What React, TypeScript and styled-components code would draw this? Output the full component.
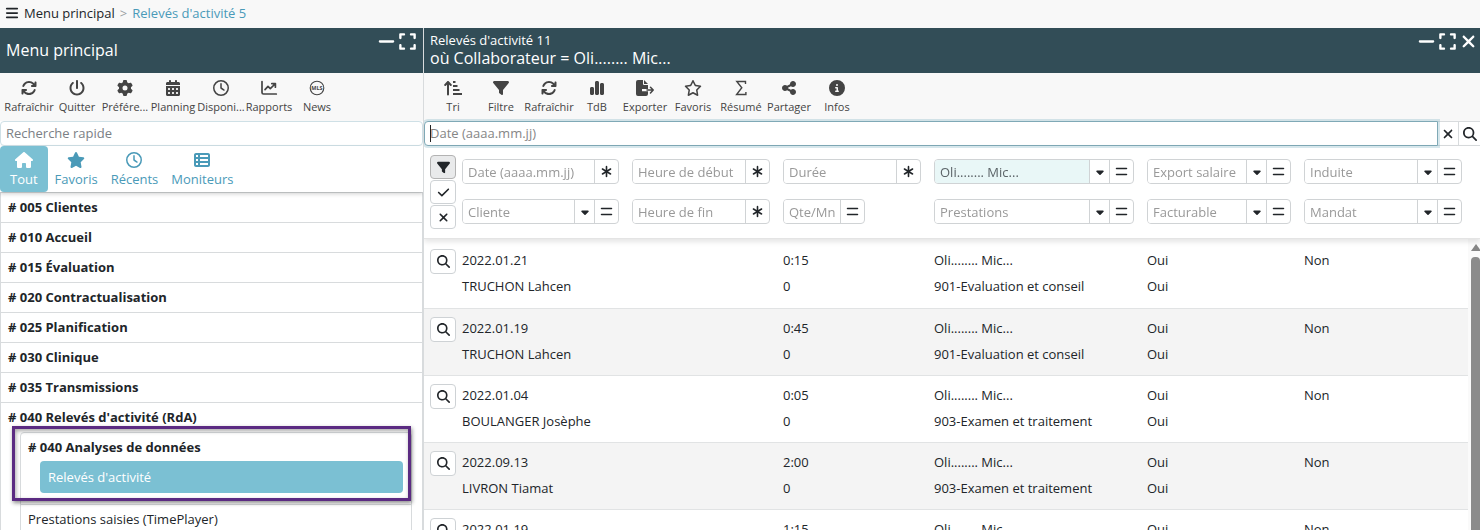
import React from "react";
import styled, { createGlobalStyle } from "styled-components";
import {
  FaBars, FaMinus, FaExpand, FaXmark, FaArrowsRotate, FaPowerOff, FaGear, FaCalendarDays, FaRegClock,
  FaHouse, FaStar, FaTableList, FaFilter, FaChartSimple, FaRegStar,
  FaShareNodes, FaCircleInfo, FaCheck, FaMagnifyingGlass, FaAsterisk, FaCaretDown,
} from "react-icons/fa6";

const line = "#d8dbdd";
const teal = "#7bc0d3";

const GlobalStyle = createGlobalStyle`
  * { box-sizing: border-box; }
  html, body { margin: 0; height: 100%; overflow: hidden; }
  #root { height: 100%; }
  body, button, input { font-family: "Open Sans", "Noto Sans", sans-serif; font-size: 13px; color: #212529; }
  button { padding: 0; cursor: pointer; }
`;

const Page = styled.div`
  height: 100vh;
  display: flex;
  flex-direction: column;
  background: #fff;
  overflow: hidden;
`;

const Breadcrumb = styled.nav`
  flex: none;
  height: 28px;
  display: flex;
  align-items: center;
  gap: 5px;
  padding: 0 5px 2px;
  background: #f8f8f8;
  a { text-decoration: none; color: #212529; }
  a:last-child { color: #4a9ab8; }
  span { color: #9a9fa3; }
`;

const BareButton = styled.button`
  display: flex;
  align-items: center;
  justify-content: center;
  border: 0;
  background: none;
  color: inherit;
`;

const Columns = styled.div`
  flex: 1;
  min-height: 0;
  display: grid;
  grid-template-columns: 106fr 264fr;
`;

const Pane = styled.section`
  min-width: 0;
  display: flex;
  flex-direction: column;
  overflow: hidden;
`;

const SidePane = styled(Pane)`
  border-right: 1px solid ${line};
`;

const TitleBar = styled.header<{ $end: number }>`
  flex: none;
  height: 45px;
  display: flex;
  align-items: center;
  justify-content: space-between;
  padding: 0 ${(p) => p.$end}px 2px 6px;
  background: #324d57;
  color: #fff;
  h1, h2 { margin: 0; font-weight: 400; font-size: 16px; line-height: 18px; }
  p { margin: 0; line-height: 17px; }
`;

const WindowButtons = styled.div`
  align-self: flex-start;
  display: flex;
  gap: 2px;
  padding-top: 4px;
  svg { width: 19px; height: 19px; }
`;

const Toolbar = styled.div<{ $indent: number }>`
  flex: none;
  height: 48px;
  display: flex;
  padding-left: ${(p) => p.$indent}px;
  background: #f8f8f8;
`;

const Tool = styled.button`
  width: 48px;
  display: flex;
  flex-direction: column;
  align-items: center;
  gap: 3px;
  padding-top: 7px;
  border: 0;
  background: none;
  color: #444;
  font-size: 11px;
  line-height: 15px;
  white-space: nowrap;
  svg { width: 18px; height: 16px; flex: none; }
`;

const QuickSearch = styled.input`
  flex: none;
  width: 100%;
  height: 25px;
  padding: 0 5px 2px;
  border: 1px solid #cfe0e6;
  border-radius: 4px;
  outline: 0;
  &::placeholder { color: #7b8085; opacity: 1; }
`;

const Tabs = styled.div`
  flex: none;
  height: 46px;
  display: flex;
  gap: 1px;
  box-shadow: 0 2px 4px rgba(0, 0, 0, 0.18);
  position: relative;
`;

const Tab = styled.button<{ $active?: boolean }>`
  display: flex;
  flex-direction: column;
  align-items: center;
  gap: 1px;
  padding: 6px ${(p) => (p.$active ? 10 : 6)}px 0;
  border: 0;
  border-radius: 4px;
  background: ${(p) => (p.$active ? teal : "none")};
  color: ${(p) => (p.$active ? "#fff" : "#4a9ab8")};
  line-height: 20px;
  svg { width: 18px; height: 16px; flex: none; }
`;

const Menu = styled.ul`
  list-style: none;
  margin: 0;
  padding: 0;
  border: 1px solid ${line};
  border-bottom: 0;
`;

const MenuItem = styled.li`
  border-bottom: 1px solid ${line};
`;

const MenuLink = styled.a<{ $strong?: boolean }>`
  display: block;
  padding: 5px 7px;
  color: #212529;
  font-weight: ${(p) => (p.$strong ? 700 : 400)};
  line-height: 19px;
  text-decoration: none;
`;

const SubMenu = styled.ul`
  list-style: none;
  margin: 0 10px 0 19px;
  padding: 0;
  border: 1px solid ${line};
  border-radius: 4px 4px 0 0;
  position: relative;
`;

const Group = styled.li`
  padding: 5px 8px 11px 7px;
  border-bottom: 1px solid ${line};
  strong { display: block; line-height: 19px; }
`;

const ActiveLink = styled.a`
  display: block;
  margin: 4px 0 0 12px;
  padding: 0 8px;
  border-radius: 4px;
  background: ${teal};
  color: #fff;
  line-height: 32px;
  text-decoration: none;
`;

const Highlight = styled.li`
  position: absolute;
  inset: -7px 0 auto -9px;
  height: 75px;
  border: 3px solid #5b2b82;
  box-shadow: 1px 2px 4px rgba(0, 0, 0, 0.45), inset 1px 2px 4px rgba(0, 0, 0, 0.35);
  pointer-events: none;
`;

const SearchRow = styled.form`
  flex: none;
  height: 25px;
  display: flex;
  position: relative;
`;

const SearchInput = styled.input`
  flex: 1;
  min-width: 0;
  padding: 0 5px 2px;
  border: 1px solid #7fa9b6;
  border-radius: 4px 0 0 4px;
  outline: 0;
  box-shadow: 0 0 0 2px rgba(123, 175, 192, 0.3);
  caret-color: transparent;
  position: relative;
  &::placeholder { color: #868686; opacity: 1; }
`;

const Caret = styled.span`
  position: absolute;
  left: 6px;
  top: 4px;
  width: 1px;
  height: 17px;
  background: #222;
`;

const SearchButton = styled(BareButton)<{ $w: number }>`
  width: ${(p) => p.$w}px;
  border: 1px solid ${line};
  border-left-width: ${(p) => (p.$w > 21 ? 1 : 0)}px;
  border-right: 0;
  color: #212529;
  svg { width: 14px; height: 14px; }
`;

const Filters = styled.div`
  flex: none;
  display: flex;
  gap: 6px;
  height: 93px;
  padding: 9px 18px 0 6px;
  border-bottom: 1px solid #e4e4e4;
  box-shadow: 0 3px 5px rgba(0, 0, 0, 0.1);
  position: relative;
`;

const FilterModes = styled.div`
  width: 26px;
`;

const ModeButton = styled(BareButton)<{ $on?: boolean }>`
  width: 26px;
  height: 24px;
  margin-bottom: 1px;
  border: 1px solid ${(p) => (p.$on ? "#b3b3b3" : "#ced2d5")};
  border-radius: 4px;
  background: ${(p) => (p.$on ? "#e9eaeb" : "#fff")};
  svg { width: 13px; height: 13px; }
`;

const FilterGrid = styled.div`
  flex: 1;
  min-width: 0;
  display: grid;
  grid-template-columns: 157fr 138fr 138fr 200fr 144fr 158fr;
  grid-auto-rows: 25px;
  gap: 15px 13px;
  padding-top: 4px;
`;

const Field = styled.div<{ $short?: boolean; $filled?: boolean }>`
  display: flex;
  min-width: 0;
  width: ${(p) => (p.$short ? "82px" : "auto")};
  border: 1px solid #d0d3d5;
  border-radius: 4px;
  overflow: hidden;
  input {
    flex: 1;
    min-width: 0;
    width: 0;
    padding: 0 0 0 5px;
    border: 0;
    outline: 0;
    color: #5c6468;
    background: ${(p) => (p.$filled ? "#e9f7f7" : "#fff")};
  }
  input::placeholder { color: #999; opacity: 1; }
`;

const FieldButton = styled(BareButton)<{ $w: number }>`
  flex: none;
  width: ${(p) => p.$w}px;
  border-left: 1px solid #d0d3d5;
  color: #212529;
  svg { width: ${(p) => (p.$w < 24 ? 12 : 13)}px; height: ${(p) => (p.$w < 24 ? 12 : 13)}px; }
`;

const Results = styled.div`
  flex: 1;
  min-height: 0;
  display: flex;
`;

const Table = styled.table`
  flex: 1;
  min-width: 0;
  display: block;
  overflow: hidden;
  tbody { display: block; }
`;

const Row = styled.tr`
  display: flex;
  min-height: 67px;
  padding: 8px 6px 0;
  border-bottom: 1px solid #e1e3e4;
  &:first-child { padding-top: 10px; min-height: 70px; }
  &:nth-child(even) { background: #f4f4f4; }
`;

const OpenCell = styled.td`
  flex: none;
  width: 26px;
  padding: 0;
`;

const Cell = styled.td<{ $w: number }>`
  flex: ${(p) => p.$w} 1 0;
  min-width: 0;
  display: flex;
  flex-direction: column;
  gap: 4px;
  padding: 0;
  margin-left: 13px;
  line-height: 22px;
  white-space: nowrap;
  ${OpenCell} + & { margin-left: 6px; }
`;

const OpenButton = styled(BareButton)`
  width: 26px;
  height: 25px;
  border: 1px solid #ced2d5;
  border-radius: 4px;
  background: #fff;
  svg { width: 13px; height: 13px; }
`;

const Scrollbar = styled.div`
  flex: none;
  width: 12px;
  display: flex;
  flex-direction: column;
  align-items: center;
  gap: 6px;
  padding: 5px 0 0 3px;
  background: #fafafa;
`;

const ScrollArrow = styled.span`
  border: 5px solid transparent;
  border-top: 0;
  border-bottom: 7px solid #858585;
`;

const ScrollThumb = styled.span`
  width: 9px;
  flex: 1;
  border-radius: 4px 4px 0 0;
  background: #8b8b8b;
`;

const ChartIcon = () => (
  <svg viewBox="0 0 16 16" fill="none" stroke="currentColor" strokeWidth="1.7" strokeLinecap="round" strokeLinejoin="round">
    <path d="M1 1.5V12.5Q1 14 2.5 14H15.3M4 9.6L7 6.4L9.3 8.6L14 4M10.8 3.6H14.4V7.2" />
  </svg>
);

const NewsIcon = () => (
  <svg viewBox="0 0 16 16" fill="none" stroke="currentColor">
    <circle cx="8" cy="8" r="6.8" strokeWidth="1.1" />
    <text x="8" y="10" textAnchor="middle" fontSize="5.5" fontWeight="700" fill="currentColor" stroke="none">MLS</text>
  </svg>
);

const SumIcon = () => (
  <svg viewBox="0 0 16 16" fill="none" stroke="currentColor" strokeWidth="1.4">
    <path d="M12.5 4V1.5H3.8L8.8 7.8L3.6 14.5H12.9V12" />
  </svg>
);

const SortIcon = () => (
  <svg viewBox="0 0 18 16" fill="none" stroke="currentColor" strokeWidth="2" strokeLinecap="round" strokeLinejoin="round">
    <path d="M4 14.5V2M1.2 5L4 2L6.8 5" />
    <path strokeLinecap="butt" d="M9 2H11.5M9 6H13.5M9 10H15.5M9 14H18" />
  </svg>
);

const ExportIcon = () => (
  <svg viewBox="0 0 18 16" fill="currentColor">
    <path d="M0 2Q0 0 2 0H7V4Q7 5 8 5H12V9H6V11.2H12V14Q12 16 10 16H2Q0 16 0 14ZM8 0L12 4H8Z" />
    <path d="M11 10.1H17M14.5 7.3L17.2 10.1L14.5 12.9" fill="none" stroke="currentColor" strokeWidth="1.5" strokeLinecap="round" strokeLinejoin="round" />
  </svg>
);

const EqualsIcon = () => (
  <svg viewBox="0 0 13 13" fill="none" stroke="currentColor" strokeWidth="1.5" strokeLinecap="round">
    <path d="M1.5 3.5H11.5M1.5 9.5H11.5" />
  </svg>
);

const mainTools: [React.ReactNode, string][] = [
  [<FaArrowsRotate />, "Rafraîchir"], [<FaPowerOff />, "Quitter"], [<FaGear />, "Préfére..."],
  [<FaCalendarDays />, "Planning"], [<FaRegClock />, "Disponi..."], [<ChartIcon />, "Rapports"], [<NewsIcon />, "News"],
];

const listTools: [React.ReactNode, string][] = [
  [<SortIcon />, "Tri"], [<FaFilter />, "Filtre"], [<FaArrowsRotate />, "Rafraîchir"],
  [<FaChartSimple />, "TdB"], [<ExportIcon />, "Exporter"], [<FaRegStar />, "Favoris"],
  [<SumIcon />, "Résumé"], [<FaShareNodes />, "Partager"], [<FaCircleInfo />, "Infos"],
];

const menu = [
  "# 005 Clientes", "# 010 Accueil", "# 015 Évaluation", "# 020 Contractualisation",
  "# 025 Planification", "# 030 Clinique", "# 035 Transmissions",
];

type FilterDef = { label: string; kind: "any" | "select" | "equals"; value?: string };
const filters: FilterDef[] = [
  { label: "Date (aaaa.mm.jj)", kind: "any" },
  { label: "Heure de début", kind: "any" },
  { label: "Durée", kind: "any" },
  { label: "Collaborateur", kind: "select", value: "Oli........ Mic..." },
  { label: "Export salaire", kind: "select" },
  { label: "Induite", kind: "select" },
  { label: "Cliente", kind: "select" },
  { label: "Heure de fin", kind: "any" },
  { label: "Qte/Mn", kind: "equals" },
  { label: "Prestations", kind: "select" },
  { label: "Facturable", kind: "select" },
  { label: "Mandat", kind: "select" },
];

const records = [
  ["2022.01.21", "0:15", "TRUCHON Lahcen", "901-Evaluation et conseil"],
  ["2022.01.19", "0:45", "TRUCHON Lahcen", "901-Evaluation et conseil"],
  ["2022.01.04", "0:05", "BOULANGER Josèphe", "903-Examen et traitement"],
  ["2022.09.13", "2:00", "LIVRON Tiamat", "903-Examen et traitement"],
  ["2022.01.19", "1:15", "TRUCHON Lahcen", "901-Evaluation et conseil"],
];

const Filter = ({ label, kind, value }: FilterDef) => (
  <Field $short={kind === "equals"} $filled={!!value}>
    <input aria-label={label} placeholder={label} defaultValue={value} />
    {kind === "select" && <FieldButton $w={20} aria-label={`Choisir ${label}`}><FaCaretDown /></FieldButton>}
    <FieldButton $w={24} aria-label={`Opérateur ${label}`}>{kind === "any" ? <FaAsterisk /> : <EqualsIcon />}</FieldButton>
  </Field>
);

const Record = ({ data: [date, time, client, service] }: { data: string[] }) => (
  <Row>
    <OpenCell><OpenButton aria-label="Ouvrir"><FaMagnifyingGlass /></OpenButton></OpenCell>
    <Cell $w={157}><span>{date}</span><span>{client}</span></Cell>
    <Cell $w={138} />
    <Cell $w={138}><span>{time}</span><span>0</span></Cell>
    <Cell $w={200}><span>Oli........ Mic...</span><span>{service}</span></Cell>
    <Cell $w={144}><span>Oui</span><span>Oui</span></Cell>
    <Cell $w={158}><span>Non</span></Cell>
  </Row>
);

export default function App() {
  return (
    <>
      <GlobalStyle />
      <Page>
        <Breadcrumb aria-label="Fil d'Ariane">
          <BareButton aria-label="Menu"><FaBars size={14} /></BareButton>
          <a href="#menu">Menu principal</a>
          <span>&gt;</span>
          <a href="#releves">Relevés d'activité 5</a>
        </Breadcrumb>
        <Columns>
          <SidePane>
            <TitleBar $end={6}>
              <h1>Menu principal</h1>
              <WindowButtons>
                <BareButton aria-label="Réduire"><FaMinus /></BareButton>
                <BareButton aria-label="Agrandir"><FaExpand /></BareButton>
              </WindowButtons>
            </TitleBar>
            <Toolbar $indent={5}>
              {mainTools.map(([icon, label]) => <Tool key={label}>{icon}{label}</Tool>)}
            </Toolbar>
            <QuickSearch aria-label="Recherche rapide" placeholder="Recherche rapide" />
            <Tabs>
              <Tab $active><FaHouse />Tout</Tab>
              <Tab><FaStar />Favoris</Tab>
              <Tab><FaRegClock />Récents</Tab>
              <Tab><FaTableList />Moniteurs</Tab>
            </Tabs>
            <Menu>
              {menu.map((m) => <MenuItem key={m}><MenuLink $strong href="#module">{m}</MenuLink></MenuItem>)}
              <MenuItem>
                <MenuLink $strong href="#rda"># 040 Relevés d'activité (RdA)</MenuLink>
                <SubMenu>
                  <Group>
                    <strong># 040 Analyses de données</strong>
                    <ActiveLink href="#releves">Relevés d'activité</ActiveLink>
                  </Group>
                  <li><MenuLink href="#prestations">Prestations saisies (TimePlayer)</MenuLink></li>
                  <Highlight aria-hidden="true" />
                </SubMenu>
              </MenuItem>
            </Menu>
          </SidePane>
          <Pane>
            <TitleBar $end={2}>
              <div>
                <p>Relevés d'activité 11</p>
                <h2>où Collaborateur = Oli........ Mic...</h2>
              </div>
              <WindowButtons>
                <BareButton aria-label="Réduire"><FaMinus /></BareButton>
                <BareButton aria-label="Agrandir"><FaExpand /></BareButton>
                <BareButton aria-label="Fermer"><FaXmark /></BareButton>
              </WindowButtons>
            </TitleBar>
            <Toolbar $indent={5}>
              {listTools.map(([icon, label]) => <Tool key={label}>{icon}{label}</Tool>)}
            </Toolbar>
            <SearchRow>
              <SearchInput autoFocus aria-label="Date" placeholder="Date (aaaa.mm.jj)" />
              <Caret aria-hidden="true" />
              <SearchButton type="button" $w={20} aria-label="Effacer"><FaXmark /></SearchButton>
              <SearchButton type="button" $w={22} aria-label="Rechercher"><FaMagnifyingGlass /></SearchButton>
            </SearchRow>
            <Filters>
              <FilterModes>
                <ModeButton $on aria-label="Filtrer"><FaFilter /></ModeButton>
                <ModeButton aria-label="Appliquer"><FaCheck /></ModeButton>
                <ModeButton aria-label="Annuler"><FaXmark /></ModeButton>
              </FilterModes>
              <FilterGrid>{filters.map((f) => <Filter key={f.label} {...f} />)}</FilterGrid>
            </Filters>
            <Results>
              <Table cellSpacing={0} aria-label="Relevés d'activité">
                <tbody>{records.map((r, i) => <Record key={i} data={r} />)}</tbody>
              </Table>
              <Scrollbar aria-hidden="true"><ScrollArrow /><ScrollThumb /></Scrollbar>
            </Results>
          </Pane>
        </Columns>
      </Page>
    </>
  );
}
